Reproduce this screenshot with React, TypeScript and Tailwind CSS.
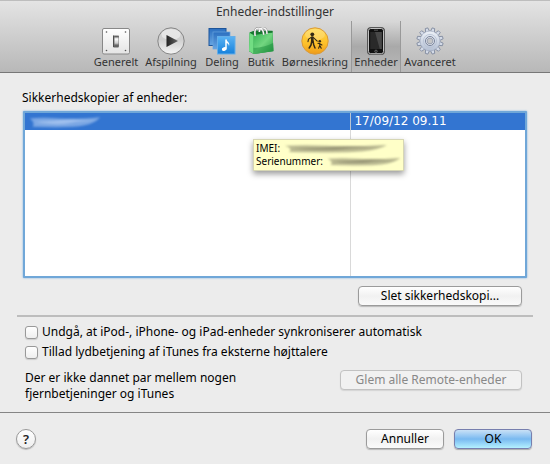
import type { ReactNode } from "react";

function SwitchIcon() {
  return (
    <svg viewBox="0 0 28 28" className="size-7" aria-hidden="true">
      <defs>
        <linearGradient id="plate" x2="0" y2="1"><stop stopColor="#fff" /><stop offset="1" stopColor="#e4e4e4" /></linearGradient>
        <linearGradient id="lever" x2="0" y2="1"><stop stopColor="#444" /><stop offset=".3" stopColor="#fff" /><stop offset=".75" stopColor="#ccc" /><stop offset="1" stopColor="#555" /></linearGradient>
      </defs>
      <rect x=".5" y="1.5" width="27" height="25.5" rx="1.5" fill="url(#plate)" stroke="#888" />
      <g fill="#555"><circle cx="4.5" cy="5" r=".8" /><circle cx="23.5" cy="5" r=".8" /><circle cx="4.5" cy="23.5" r=".8" /><circle cx="23.5" cy="23.5" r=".8" /></g>
      <rect x="11" y="8.5" width="6" height="11.5" rx=".7" fill="#777" />
      <rect x="12.5" y="9" width="4" height="9.5" fill="url(#lever)" />
      <path d="M11.5 8.5v11.5h5" fill="none" stroke="#444" strokeWidth=".8" />
    </svg>
  );
}

function PlayIcon() {
  return (
    <svg viewBox="0 0 28 28" className="size-7" aria-hidden="true">
      <defs>
        <linearGradient id="disc" x2="0" y2="1"><stop stopColor="#d2d2d2" /><stop offset=".45" stopColor="#cfcfcf" /><stop offset="1" stopColor="#f5f5f5" /></linearGradient>
        <linearGradient id="arrow"><stop stopColor="#222" /><stop offset="1" stopColor="#666" /></linearGradient>
      </defs>
      <circle cx="14" cy="14" r="13.2" fill="url(#disc)" stroke="#858585" strokeWidth="1" />
      <ellipse cx="14" cy="7.4" rx="9.5" ry="5.4" fill="#fff" opacity=".45" />
      <path d="M9.5 8l11.5 6-11.5 6z" fill="url(#arrow)" />
    </svg>
  );
}

function SharingIcon() {
  return (
    <svg viewBox="0 0 28 28" className="size-7" aria-hidden="true">
      <defs>
        <linearGradient id="back" x2="0" y2="1"><stop stopColor="#2b6fc0" /><stop offset="1" stopColor="#67a5e2" /></linearGradient>
        <linearGradient id="front" x2="0" y2="1"><stop stopColor="#5ab2f3" /><stop offset="1" stopColor="#1681dc" /></linearGradient>
      </defs>
      <rect x="1" y="1.5" width="17" height="17" fill="url(#back)" stroke="#1d5499" />
      <rect x="5" y="5" width="17" height="17" fill="url(#back)" stroke="#68a4de" strokeWidth=".7" />
      <rect x="9.5" y="9.5" width="17.5" height="17.5" fill="url(#front)" stroke="#64aee9" />
      <path d="M18 12.5v9" stroke="#fff" strokeWidth="1.5" />
      <path d="M18 12c.2 2.5 4.5 3.3 3 7-.3-1.9-1.3-2.8-3-3z" fill="#fff" />
      <ellipse cx="16.3" cy="22" rx="2.5" ry="1.9" fill="#fff" transform="rotate(-15 16.3 22)" />
    </svg>
  );
}

function BagIcon() {
  return (
    <svg viewBox="0 0 28 28" className="size-7" aria-hidden="true">
      <defs>
        <linearGradient id="bag" x2="1" y2="1"><stop stopColor="#36b455" /><stop offset=".5" stopColor="#72d680" /><stop offset="1" stopColor="#249b43" /></linearGradient>
      </defs>
      <path d="M2.5 5.5L8 3.6l17.5.2.9 20.4L6.5 27 2 24.2z" fill="#239141" />
      <path d="M6.5 8L25.5 5.4l.9 18.6L6.5 27z" fill="url(#bag)" />
      <path d="M2.5 5.8l4 2.2v18.7L2 24z" fill="#72dd83" />
      <path d="M2.8 5.5L8 3.8l17.5.2v1.4L6.5 7.8z" fill="#17772f" />
      <path d="M6.5 21c6-.3 14-1.7 19.6-5l.3 8L6.5 27z" fill="#168838" opacity=".45" />
      <path d="M8.2 9C7 2.5 9 .9 11.8 1.1 15 1.2 16.5 3 16.7 7.8M12.3 5C12.4 1.8 13.8.8 16 .9c2.8.1 4 2 4 6" fill="none" stroke="#858585" strokeWidth="2" />
      <path d="M8.2 9C7 2.5 9 .9 11.8 1.1 15 1.2 16.5 3 16.7 7.8M12.3 5C12.4 1.8 13.8.8 16 .9c2.8.1 4 2 4 6" fill="none" stroke="#fafafa" strokeWidth="1.3" />
    </svg>
  );
}

function ParentalIcon() {
  return (
    <svg viewBox="0 0 28 28" className="size-7" aria-hidden="true">
      <defs>
        <linearGradient id="sun" x2="0" y2="1"><stop stopColor="#ffd84a" /><stop offset=".6" stopColor="#fdc02a" /><stop offset="1" stopColor="#ee9a18" /></linearGradient>
      </defs>
      <circle cx="14" cy="14" r="13.2" fill="url(#sun)" stroke="#d99a3a" />
      <ellipse cx="14" cy="7.5" rx="10" ry="5.8" fill="#fff" opacity=".2" />
      <g fill="#332815">
        <circle cx="11.3" cy="7.3" r="1.9" />
        <circle cx="18.8" cy="14.3" r="1.3" />
      </g>
      <g fill="none" stroke="#332815" strokeLinecap="round" strokeLinejoin="round">
        <path d="M11.3 10.5v4" strokeWidth="2.7" />
        <path d="M10.5 10.3l-3 1.8-.5 2.6M12.2 10.3l2.4 2.3 1.6 1.6" strokeWidth="1.1" />
        <path d="M10.7 14.5L10 18l-1.8 3M12 14.5l.8 3.5 1.2 3" strokeWidth="1.5" />
        <path d="M18.8 16.5v2l-1.2 2.7M18.8 18.5l1.4 2.7M16.9 16.3l1.5.3 2.5 1.3" strokeWidth="1.1" />
      </g>
    </svg>
  );
}

function PhoneIcon() {
  return (
    <svg viewBox="0 0 28 28" className="size-7" aria-hidden="true">
      <rect x="5.5" y=".6" width="17" height="27" rx="3" fill="#111" stroke="#555" />
      <rect x="6.5" y="1.5" width="15" height="25.2" rx="2.2" fill="#111" stroke="#d5d5d5" strokeWidth=".9" />
      <rect x="8.2" y="5" width="11.6" height="17" fill="#292929" />
      <path d="M13 5h6.8v17h-2z" fill="#484848" />
      <path d="M12 3.2h4" stroke="#777" strokeWidth=".7" />
      <circle cx="14" cy="24.3" r="1.2" fill="none" stroke="#888" strokeWidth=".7" />
    </svg>
  );
}

function GearIcon() {
  const teeth = Array.from({ length: 12 }, (_, i) => i * 30 + 15);
  return (
    <svg viewBox="0 0 28 28" className="size-7" aria-hidden="true">
      <defs>
        <linearGradient id="gear" x2="0" y2="1"><stop stopColor="#edf1f8" /><stop offset="1" stopColor="#b4bfd3" /></linearGradient>
      </defs>
      {teeth.map((angle) => (
        <path key={angle} d="M11.9 5l.8-4.2h2.6l.8 4.2z" fill="#d3dae7" stroke="#7d879c" strokeWidth=".8" transform={`rotate(${angle} 14 14)`} />
      ))}
      <circle cx="14" cy="14" r="10" fill="url(#gear)" stroke="#99a3b8" strokeWidth=".5" />
      <circle cx="14" cy="14" r="6.6" fill="none" stroke="#b6c0d3" strokeWidth=".8" />
      <circle cx="14" cy="14" r="4.5" fill="#e3e6ec" stroke="#78839b" strokeWidth="1" />
      <circle cx="14" cy="14" r="2.9" fill="#c5c6c8" stroke="#8e97a9" strokeWidth=".8" />
    </svg>
  );
}

const tabs: { label: string; icon: ReactNode; width: string; selected?: boolean }[] = [
  { label: "Generelt", icon: <SwitchIcon />, width: "w-[50px]" },
  { label: "Afspilning", icon: <PlayIcon />, width: "w-[60px]" },
  { label: "Deling", icon: <SharingIcon />, width: "w-[42px]" },
  { label: "Butik", icon: <BagIcon />, width: "w-[36px]" },
  { label: "Børnesikring", icon: <ParentalIcon />, width: "w-[72px]" },
  {
    label: "Enheder",
    icon: <PhoneIcon />,
    width: "w-[50px] border-x border-[#999] bg-linear-to-b from-[#d8d8d8] via-[#a9a9a9] to-[#b9b9b9]",
    selected: true,
  },
  { label: "Avanceret", icon: <GearIcon />, width: "w-[58px]" },
];

function Smudge({ className, color }: { className: string; color: string }) {
  return (
    <svg viewBox="0 0 100 10" preserveAspectRatio="none" className={className} aria-hidden="true">
      <path d="M1 2Q20 1 42 2T99 1Q92 6 76 8T5 9Q9 5 1 2z" fill={color} opacity=".5" />
      <path d="M8 5Q38 8 55 6T94 4Q62 2 50 3T8 5z" fill={color} opacity=".5" />
    </svg>
  );
}

const button =
  "h-5 rounded-[4px] border border-[#9b9b9b] bg-linear-to-b from-white via-[#f1f1f1] to-[#fafafa] text-center leading-4 shadow-[0_1px_1px_#bbb]";

function CheckRow({ children }: { children: ReactNode }) {
  return (
    <label className="flex h-5 items-center gap-1">
      <input
        type="checkbox"
        className="size-[13px] appearance-none rounded-[3px] border border-[#999] bg-linear-to-b from-white to-[#eee] shadow-[0_1px_1px_#ccc] checked:bg-[#5b9ee8]"
      />
      {children}
    </label>
  );
}

export default function App() {
  return (
    <div className="min-h-screen bg-[#ececec] font-['Noto_Sans','Lucida_Grande',sans-serif] text-[12px] leading-4 text-black">
      <header className="border-t border-b border-t-[#bdbdbd] border-b-[#777] bg-linear-to-b from-[#e4e4e4] to-[#b8b8b8]">
        <h1 className="h-5 pt-[3px] text-center leading-4 text-[#333]">Enheder-indstillinger</h1>
        <nav className="flex justify-center">
          {tabs.map((tab) => (
            <button
              key={tab.label}
              type="button"
              aria-pressed={!!tab.selected}
              className={`flex h-[51px] flex-col items-center pt-[6px] text-[11px] leading-[14px] whitespace-nowrap text-[#333] ${tab.width}`}
            >
              {tab.icon}
              {tab.label}
            </button>
          ))}
        </nav>
      </header>

      <main className="border-b border-[#858585] px-[17px] pt-[17px] pb-[10px]">
        <h2 id="backups" className="px-[5px]">Sikkerhedskopier af enheder:</h2>
        <div className="relative mx-[6px] mt-[5px] h-[167px] rounded-[1px] border-2 border-[#70a7d8] bg-white shadow-[0_0_2px_#6aa8df]">
          <table aria-labelledby="backups" className="h-full w-full table-fixed border-collapse">
            <tbody>
              <tr className="h-[17px] bg-[#3375d1] text-white">
                <td className="w-[65.2%] border-r border-[#b9c4d2] p-0">
                  <Smudge className="ml-1 h-3 w-[72px] blur-[1px]" color="#c4d9f8" />
                </td>
                <td className="p-0 pl-[3px] font-['DejaVu_Sans','Lucida_Grande',sans-serif] leading-[17px]">17/09/12 09.11</td>
              </tr>
              <tr>
                <td className="border-r border-[#d9d9d9] p-0" />
                <td className="p-0" />
              </tr>
            </tbody>
          </table>
          <div
            role="tooltip"
            className="absolute top-[26px] left-[228px] w-[151px] border border-[#d6d6b4] bg-[#ffffc8] px-[2px] py-[2px] text-[10px] leading-[13px] shadow-[0_3px_6px_rgba(0,0,0,0.4)]"
          >
            <p className="flex items-center gap-1">
              IMEI: <Smudge className="h-[9px] w-[104px] blur-[1px]" color="#77755c" />
            </p>
            <p className="flex items-center gap-1">
              Serienummer: <Smudge className="h-[9px] w-[74px] blur-[1px]" color="#77755c" />
            </p>
          </div>
        </div>

        <div className="flex justify-end pt-2 pr-[11px] pb-[9px]">
          <button type="button" className={`w-[164px] ${button}`}>Slet sikkerhedskopi...</button>
        </div>
        <hr className="border-t-2 border-[#bdbdbd]" />

        <div className="px-2 pt-[5px]">
          <CheckRow>Undgå, at iPod-, iPhone- og iPad-enheder synkroniserer automatisk</CheckRow>
          <CheckRow>Tillad lydbetjening af iTunes fra eksterne højttalere</CheckRow>
          <div className="flex items-start justify-between pt-2 pr-[3px]">
            <p>
              Der er ikke dannet par mellem nogen
              <br />
              fjernbetjeninger og iTunes
            </p>
            <button type="button" disabled className="h-5 w-[182px] rounded-[4px] border border-[#c2c2c2] bg-[#f1f1f1] leading-4 text-[#888] shadow-[0_1px_1px_#d5d5d5]">
              Glem alle Remote-enheder
            </button>
          </div>
        </div>
      </main>

      <footer className="flex items-center gap-[10px] px-4 py-4 pr-[18px]">
        <button type="button" aria-label="Hjælp" className="mr-auto size-5 rounded-full border border-[#999] bg-linear-to-b from-white to-[#eee] text-[13px] leading-4 font-semibold text-[#222] shadow-[0_1px_1px_#bbb]">
          ?
        </button>
        <button type="button" className={`w-[78px] ${button}`}>Annuller</button>
        <button type="button" className="h-5 w-[78px] rounded-[4px] border border-[#777fae] bg-linear-to-b from-[#c9e1f6] via-[#79b9f0] to-[#b4f1ff] leading-4 shadow-[0_1px_1px_#aaa]">
          OK
        </button>
      </footer>
    </div>
  );
}
